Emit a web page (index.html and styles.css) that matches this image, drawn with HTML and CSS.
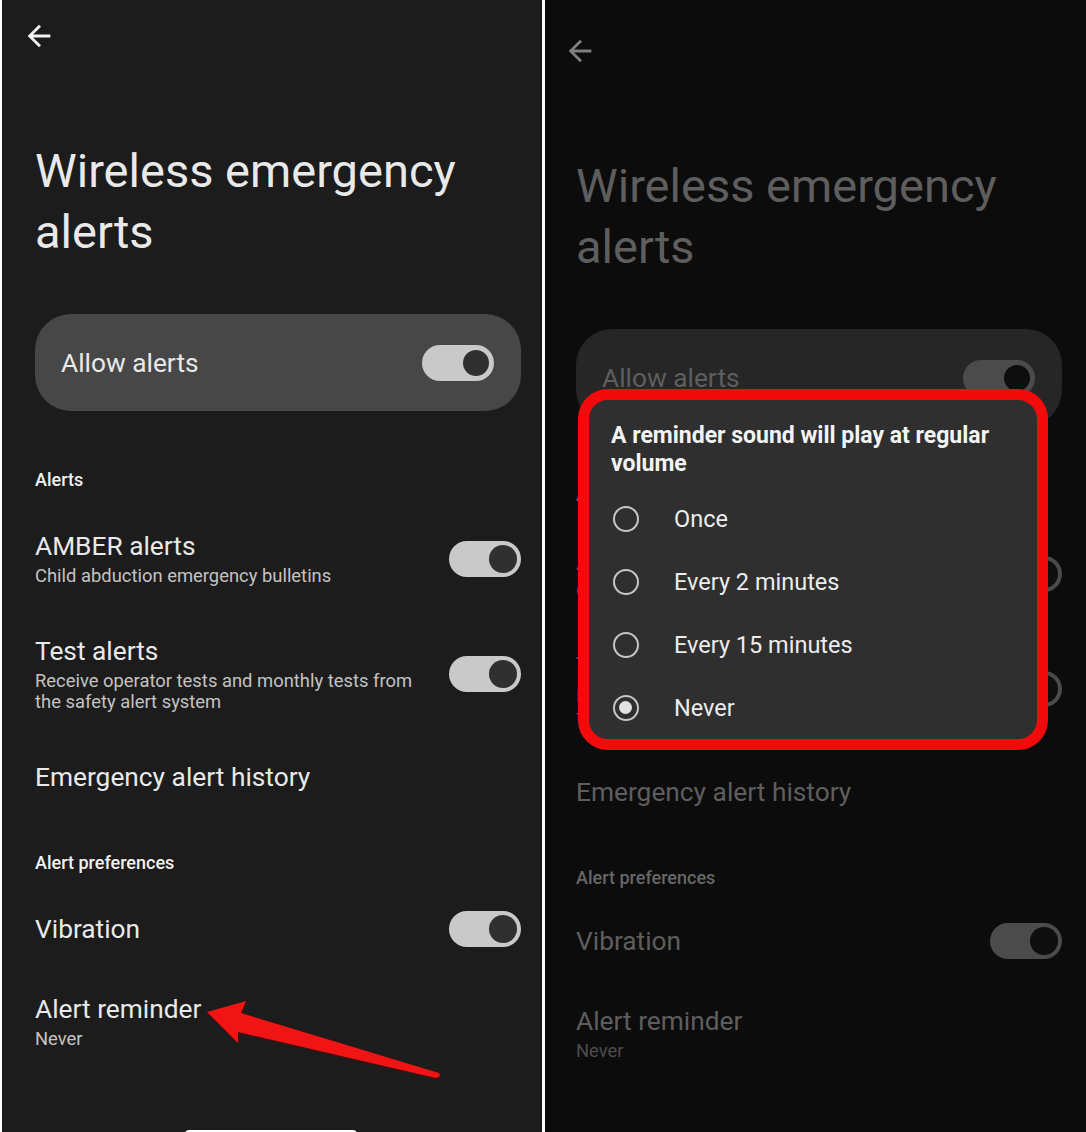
FILE: index.html
```html
<!DOCTYPE html>
<html lang="en">

<head>
    <meta charset="UTF-8">
    <meta name="viewport" content="width=device-width, initial-scale=1.0">
    <title>Wireless emergency alerts</title>
    <link rel="stylesheet" href="styles.css">
</head>

<body>
    <div class="frame">
        <!-- settings screen -->
        <section class="screen">
            <header class="topbar">
                <svg class="back" viewBox="0 0 24 24"><path d="M20 11H7.83l5.59-5.59L12 4l-8 8 8 8 1.41-1.41L7.83 13H20v-2z"/></svg>
            </header>
            <h1 class="page-title">Wireless emergency alerts</h1>
            <div class="main-switch">
                <span>Allow alerts</span>
                <span class="toggle"></span>
            </div>

            <h2 class="section-label">Alerts</h2>
            <div class="pref">
                <div class="pref-text">
                    <div class="pref-title">AMBER alerts</div>
                    <div class="pref-sub">Child abduction emergency bulletins</div>
                </div>
                <span class="toggle"></span>
            </div>
            <div class="pref">
                <div class="pref-text">
                    <div class="pref-title">Test alerts</div>
                    <div class="pref-sub">Receive operator tests and monthly tests from the safety alert system</div>
                </div>
                <span class="toggle"></span>
            </div>
            <div class="pref">
                <div class="pref-text">
                    <div class="pref-title">Emergency alert history</div>
                </div>
            </div>

            <h2 class="section-label">Alert preferences</h2>
            <div class="pref">
                <div class="pref-text">
                    <div class="pref-title">Vibration</div>
                </div>
                <span class="toggle"></span>
            </div>
            <div class="pref">
                <div class="pref-text">
                    <div class="pref-title">Alert reminder</div>
                    <div class="pref-sub">Never</div>
                </div>
            </div>

            <div class="home-bar"></div>
        </section>

        <!-- same screen with the reminder dialog open -->
        <section class="screen screen-dim">
            <header class="topbar">
                <svg class="back" viewBox="0 0 24 24"><path d="M20 11H7.83l5.59-5.59L12 4l-8 8 8 8 1.41-1.41L7.83 13H20v-2z"/></svg>
            </header>
            <h1 class="page-title">Wireless emergency alerts</h1>
            <div class="main-switch">
                <span>Allow alerts</span>
                <span class="toggle"></span>
            </div>

            <h2 class="section-label">Alerts</h2>
            <div class="pref">
                <div class="pref-text">
                    <div class="pref-title">AMBER alerts</div>
                    <div class="pref-sub">Child abduction emergency bulletins</div>
                </div>
                <span class="toggle"></span>
            </div>
            <div class="pref">
                <div class="pref-text">
                    <div class="pref-title">Test alerts</div>
                    <div class="pref-sub">Receive operator tests and monthly tests from the safety alert system</div>
                </div>
                <span class="toggle"></span>
            </div>
            <div class="pref">
                <div class="pref-text">
                    <div class="pref-title">Emergency alert history</div>
                </div>
            </div>

            <h2 class="section-label">Alert preferences</h2>
            <div class="pref pref-tight">
                <div class="pref-text">
                    <div class="pref-title">Vibration</div>
                </div>
                <span class="toggle"></span>
            </div>
            <div class="pref">
                <div class="pref-text">
                    <div class="pref-title">Alert reminder</div>
                    <div class="pref-sub">Never</div>
                </div>
            </div>

            <div class="dialog">
                <div class="dialog-title">A reminder sound will play at regular volume</div>
                <div class="options">
                    <div class="option"><span class="radio"></span>Once</div>
                    <div class="option"><span class="radio"></span>Every 2 minutes</div>
                    <div class="option"><span class="radio"></span>Every 15 minutes</div>
                    <div class="option"><span class="radio checked"></span>Never</div>
                </div>
            </div>
        </section>

        <!-- red annotation arrow -->
        <svg class="pointer" viewBox="0 0 1086 1132">
            <polygon points="207,1012 246,1001 241,1013 439,1073 440,1076 436,1078 238,1032 238,1043"/>
        </svg>
    </div>
</body>

</html>
```

FILE: styles.css
```css
* {
    box-sizing: border-box;
}

body {
    margin: 0;
    background: #fff;
    font-family: Roboto, "Noto Sans", sans-serif;
}

.frame {
    position: relative;
    display: flex;
    gap: 3px;
    padding-left: 2px;
    width: 1086px;
    height: 1132px;
    overflow: hidden;
    background: #fff;
}

.screen {
    position: relative;
    width: 540px;
    height: 1132px;
    padding: 0 21px 0 33px;
    background: #1c1c1c;
    color: #e9e9e9;
}

.topbar {
    height: 72px;
    display: flex;
    align-items: center;
}

.back {
    width: 34px;
    height: 34px;
    margin-left: -13px;
    fill: #f4f4f4;
}

.page-title {
    margin: 68px 0 0;
    font-size: 47px;
    font-weight: 400;
    line-height: 61px;
}

.main-switch {
    display: flex;
    align-items: center;
    justify-content: space-between;
    height: 97px;
    margin: 52px 0 23px;
    padding: 0 27px 0 26px;
    border-radius: 36px;
    background: #474747;
    font-size: 26.3px;
}

.main-switch .toggle::after {
    top: 5px;
    right: 5px;
    width: 26px;
    height: 26px;
}

.section-label {
    margin: 0;
    padding: 35px 0 15px;
    font-size: 18px;
    font-weight: 500;
    line-height: 22px;
    color: #f2f2f2;
}

.pref {
    display: flex;
    align-items: center;
    gap: 20px;
    padding: 25px 0;
}

.pref-text {
    flex: 1;
    max-width: 400px;
}

.pref-title {
    font-size: 26.3px;
    line-height: 30px;
}

.pref-sub {
    margin-top: 4px;
    font-size: 18.4px;
    line-height: 21px;
    color: #c3c3c3;
}

.pref .toggle {
    margin: -3px 0 -3px auto;
}

.toggle {
    position: relative;
    flex: 0 0 72px;
    width: 72px;
    height: 36px;
    border-radius: 18px;
    background: #c9c9c9;
}

.toggle::after {
    content: "";
    position: absolute;
    top: 4px;
    right: 4px;
    width: 28px;
    height: 28px;
    border-radius: 50%;
    background: #303030;
}

.home-bar {
    position: absolute;
    left: 183px;
    top: 1130px;
    width: 172px;
    height: 8px;
    border-radius: 4px;
    background: #fff;
}

/* dimmed copy behind the dialog */
.screen-dim {
    flex: 1;
    padding: 15px 24px 0 31px;
    background: #0c0c0c;
    color: #5e5e5e;
}

.screen-dim .back {
    fill: #7f7f7f;
}

.screen-dim .main-switch {
    background: #262626;
}

.screen-dim .section-label {
    color: #676767;
}

.screen-dim .pref-sub {
    color: #4d4d4d;
}

.screen-dim .pref-tight {
    padding-top: 22px;
}

.screen-dim .toggle {
    background: #4b4b4b;
}

.screen-dim .toggle::after {
    background: #0e0e0e;
}

.dialog {
    position: absolute;
    left: 33px;
    top: 389px;
    width: 470px;
    padding: 22px 22px 0;
    border: 11px solid #f30b0b;
    border-radius: 30px;
    background: #2f2f2f;
    color: #ececec;
}

.dialog-title {
    font-size: 23px;
    font-weight: 700;
    line-height: 28px;
    color: #f4f4f4;
}

.options {
    margin-top: 9px;
}

.option {
    display: flex;
    align-items: center;
    gap: 35px;
    height: 63px;
    padding-left: 2px;
    font-size: 23.5px;
}

.radio {
    position: relative;
    width: 26px;
    height: 26px;
    border: 2.5px solid #c6c6c6;
    border-radius: 50%;
}

.radio.checked::after {
    content: "";
    position: absolute;
    top: 4px;
    left: 4px;
    width: 13px;
    height: 13px;
    border-radius: 50%;
    background: #e2e2e2;
}

.pointer {
    position: absolute;
    left: 0;
    top: 0;
    width: 1086px;
    height: 1132px;
    pointer-events: none;
    fill: #f01414;
    filter: drop-shadow(1px 1px 1px rgba(120, 0, 0, 0.6));
}
```
